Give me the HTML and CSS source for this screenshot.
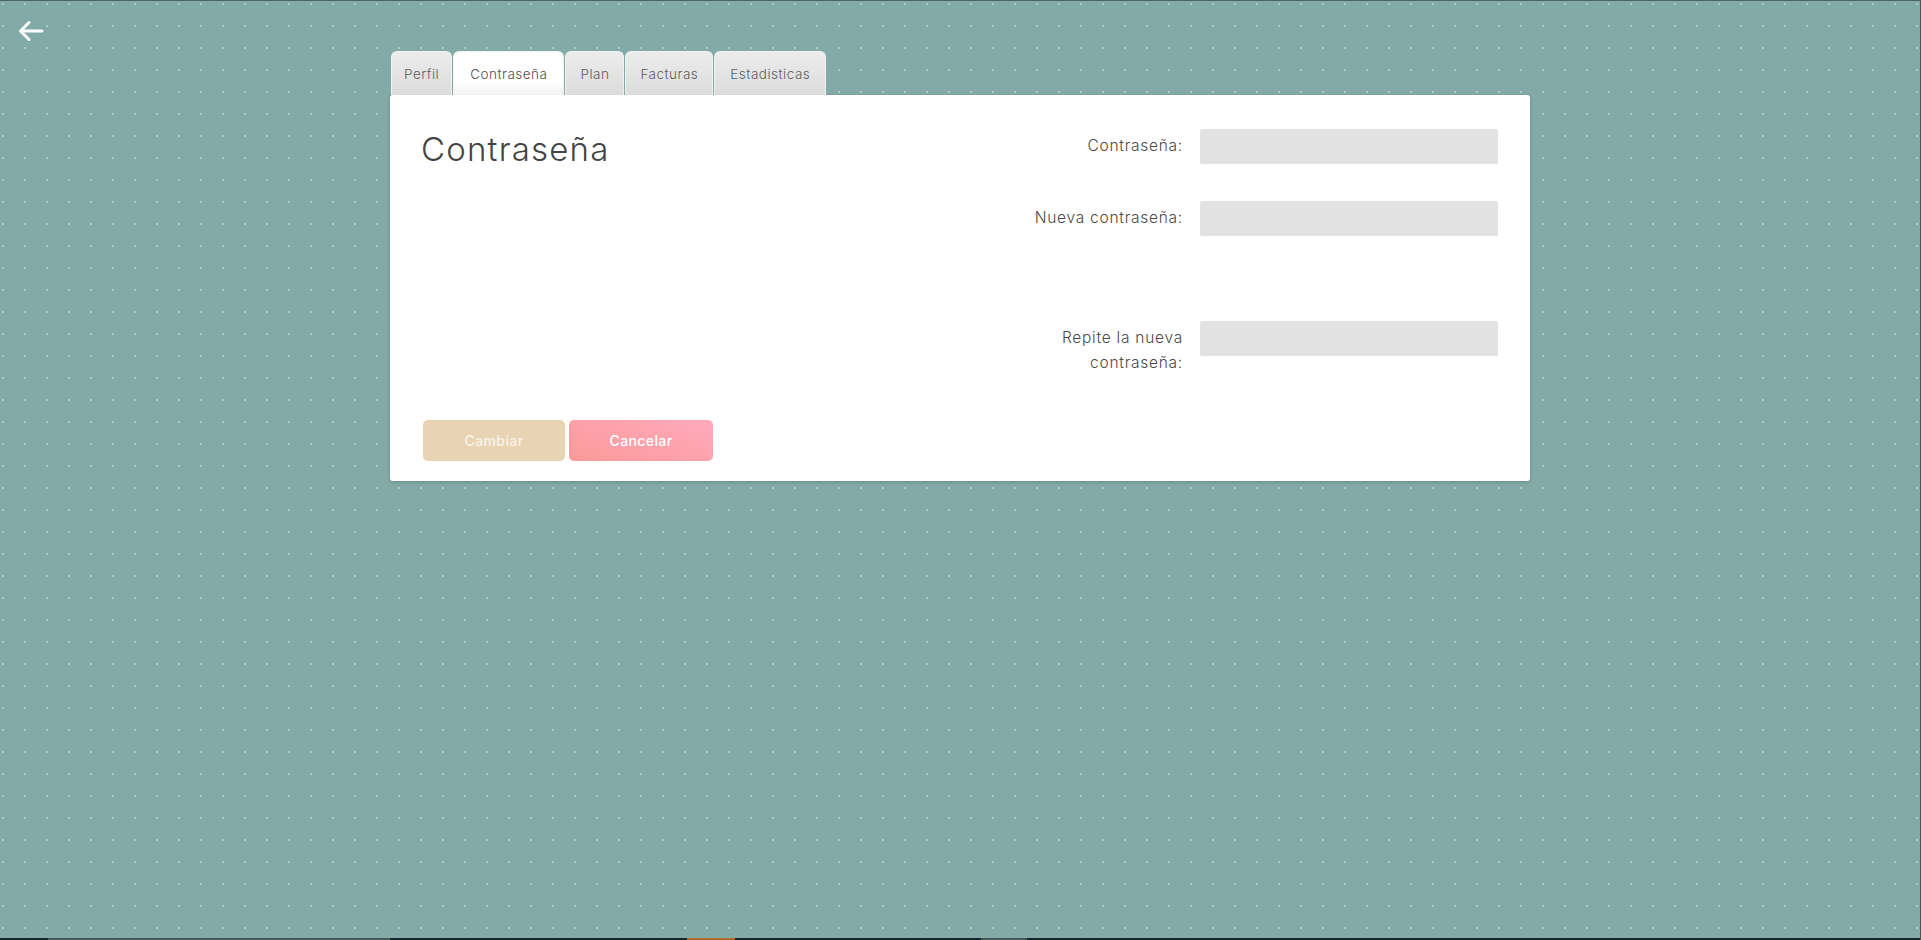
FILE: index.html
```html
<!DOCTYPE html>
<html lang="es">
<head>
<meta charset="utf-8">
<title>Contraseña</title>
<link rel="stylesheet" href="styles.css">
</head>
<body>
<div class="app">
  <main class="page">
    <a class="back" href="#" aria-label="Volver">
      <svg width="26" height="22" viewBox="0 0 26 22" fill="none" stroke="#ffffff" stroke-width="3" stroke-linecap="round" stroke-linejoin="round">
        <path d="M24 11H3"/>
        <path d="M11 2.5L2.5 11L11 19.5"/>
      </svg>
    </a>
    <section class="panel">
      <nav class="tabs">
        <span class="tab">Perfil</span>
        <span class="tab active">Contraseña</span>
        <span class="tab">Plan</span>
        <span class="tab">Facturas</span>
        <span class="tab">Estadisticas</span>
      </nav>
      <div class="card">
        <div class="card-body">
          <h1 class="title">Contraseña</h1>
          <form class="form">
            <div class="row">
              <label class="label">Contraseña:</label>
              <input class="input" type="password">
            </div>
            <div class="row">
              <label class="label">Nueva contraseña:</label>
              <input class="input" type="password">
            </div>
            <div class="row row-spaced">
              <label class="label">Repite la nueva contraseña:</label>
              <input class="input" type="password">
            </div>
          </form>
        </div>
        <div class="actions">
          <button class="btn btn-change" type="button">Cambiar</button>
          <button class="btn btn-cancel" type="button">Cancelar</button>
        </div>
      </div>
    </section>
  </main>
  <footer class="strip">
    <span class="seg seg-a"></span>
    <span class="seg seg-b"></span>
    <span class="seg seg-c"></span>
    <span class="seg seg-d"></span>
    <span class="seg seg-e"></span>
    <span class="seg seg-f"></span>
    <span class="seg seg-g"></span>
  </footer>
</div>
</body>
</html>
```

FILE: styles.css
```css
* { box-sizing: border-box; }

html, body {
  margin: 0;
  padding: 0;
  height: 100%;
}

body {
  font-family: "Inter", "Open Sans", sans-serif;
  color: #555;
  background-color: #82aba8;
}

.app {
  min-height: 100vh;
  display: flex;
  flex-direction: column;
  background-color: #82aba8;
  background-image: radial-gradient(circle, rgba(255, 255, 255, 0.36) 0.9px, transparent 1.3px);
  background-size: 22px 22px;
  background-position: -8px -8px;
  border-top: 1px solid #4a6766;
  border-right: 1px solid #3f5a59;
}

.page {
  flex: 1;
  display: flex;
  flex-direction: column;
}

.back {
  display: block;
  width: 26px;
  height: 22px;
  margin: 19px 0 0 18px;
}

.back svg { display: block; }

.panel {
  width: 1140px;
  margin: 9px auto 0;
}

.tabs {
  display: flex;
  gap: 1px;
  padding-left: 1px;
  height: 44px;
}

.tab {
  display: flex;
  align-items: center;
  padding: 0 14px;
  font-size: 13.5px;
  font-weight: 300;
  letter-spacing: 0.5px;
  color: #5e5e5e;
  background: linear-gradient(#ececec, #dcdcdc);
  border: 1px solid #f2f2f2;
  border-bottom: none;
  border-radius: 6px 6px 0 0;
}

.tab:first-child { padding: 0 12px; }

.tab:last-child { padding: 0 15px; }

.tab.active {
  background: linear-gradient(#ffffff 70%, #f1f1f1);
  color: #4f4f4f;
  padding: 0 16px;
}

.card {
  background: #ffffff;
  border-radius: 3px;
  box-shadow: 0 1px 4px rgba(0, 0, 0, 0.18);
  padding: 34px 32px 20px 31px;
}

.card-body {
  display: flex;
  justify-content: space-between;
  align-items: flex-start;
}

.title {
  margin: 0;
  font-size: 33px;
  font-weight: 300;
  line-height: 40px;
  color: #444;
  letter-spacing: 1.2px;
}

.form {
  display: flex;
  flex-direction: column;
}

.row {
  display: flex;
  align-items: flex-start;
  gap: 17px;
}

.row + .row { margin-top: 37px; }
.row.row-spaced { margin-top: 85px; }

.label {
  width: 180px;
  text-align: right;
  font-size: 15.5px;
  font-weight: 300;
  letter-spacing: 0.75px;
  line-height: 25px;
  padding-top: 4px;
  color: #4a4a4a;
}

.input {
  width: 298px;
  height: 35px;
  border: none;
  border-radius: 2px;
  background: #e2e2e2;
  outline: none;
}

.actions {
  display: flex;
  gap: 4px;
  margin-top: 45px;
  padding-left: 2px;
}

.btn {
  height: 41px;
  border: none;
  border-radius: 5px;
  font-family: "Inter", "Open Sans", sans-serif;
  font-size: 14px;
  font-weight: 500;
  letter-spacing: 0.4px;
  color: #ffffff;
}

.btn-change {
  width: 142px;
  background: #e8d3b3;
  color: #fbf3e8;
}

.btn-cancel {
  width: 144px;
  background: linear-gradient(20deg, #fb9999 0%, #ffaabd 100%);
}

.strip {
  display: flex;
  height: 2px;
  background: #14262a;
}

.seg { display: block; height: 2px; }
.seg-a { width: 48px; }
.seg-b { width: 342px; background: #4a5858; }
.seg-c { width: 297px; }
.seg-d { width: 48px; background: #b06a2a; }
.seg-e { width: 246px; }
.seg-f { width: 46px; background: #4a5858; }
.seg-g { flex: 1; }
```
